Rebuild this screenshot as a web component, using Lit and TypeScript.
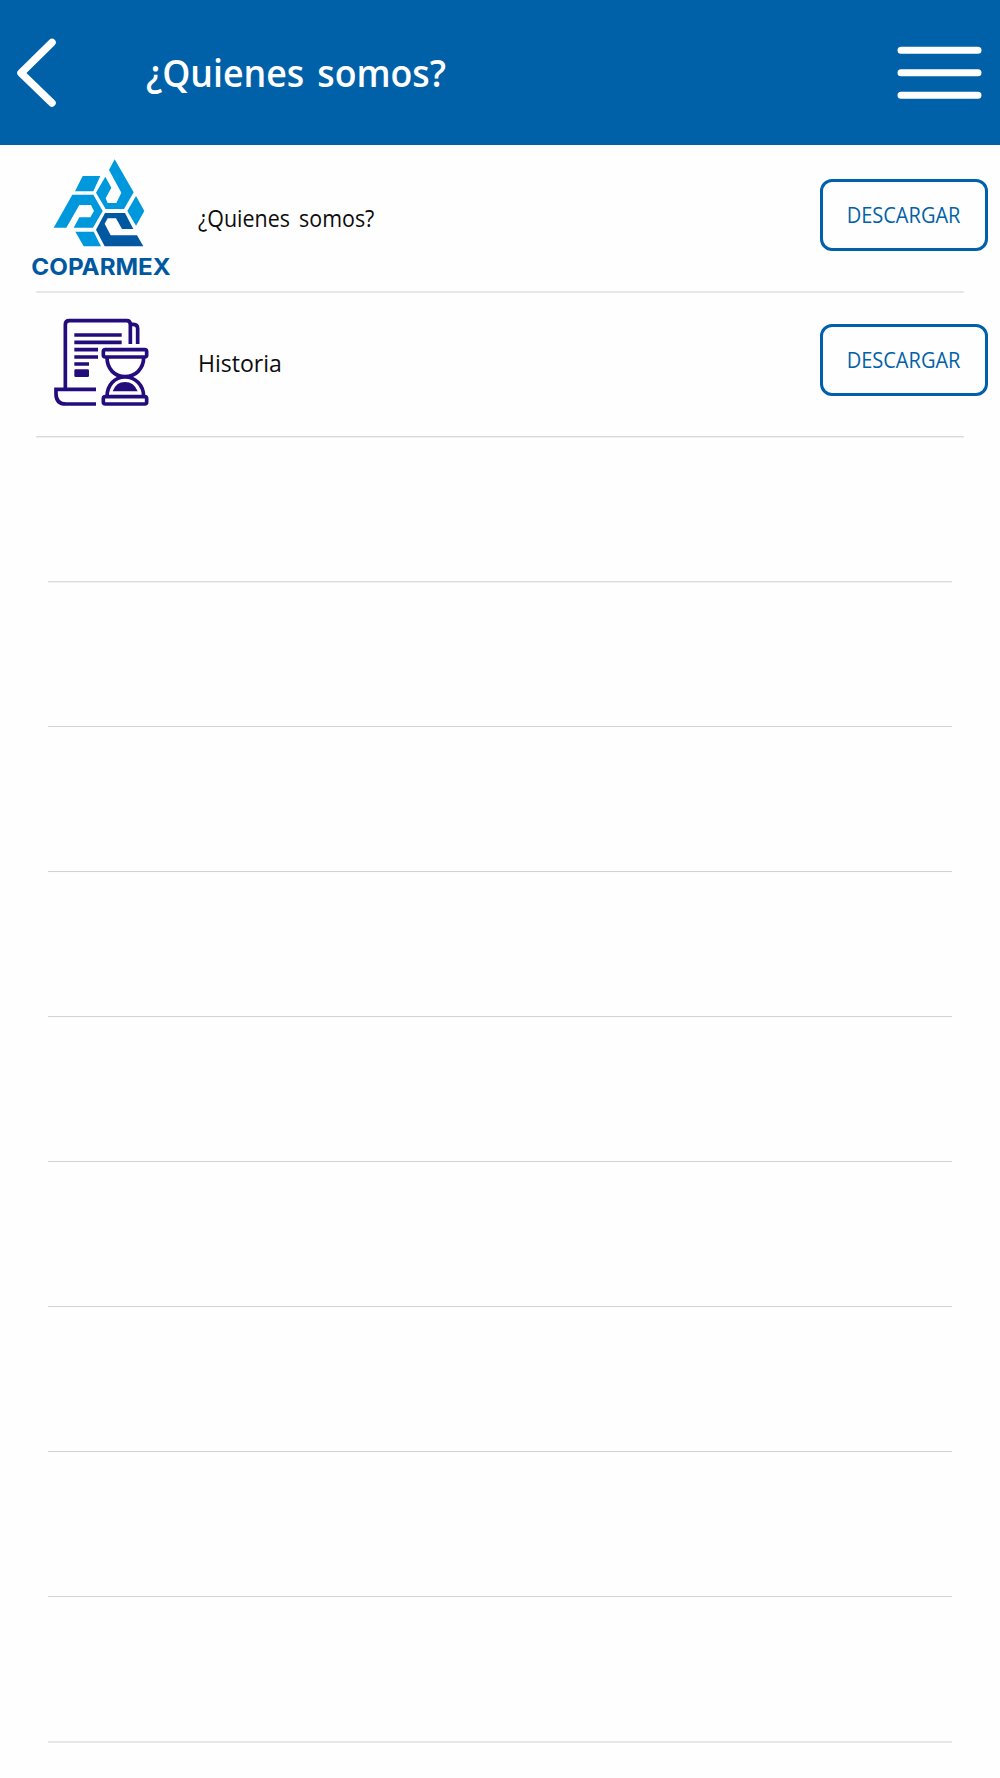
import { LitElement, html, css, svg } from "lit";
import { customElement } from "lit/decorators.js";

const logo = svg`<svg class="logo" viewBox="0 0 480 435" role="img">
  <g fill="#0098dc">
    <path d="M188 93H241L220 139H165Z"/>
    <path d="M284 43L341 142L312 192H257L228 143L256 95L274 128L257 160L263 174H289L304 143L267 75Z"/>
    <path d="M348 153L373 198L348 242L322 198Z"/>
    <path d="M157 149H220L248 198L219 248H161L178 217H211L222 198L213 180H178L139 248H101Z"/>
    <path d="M166 260H221L243 304H191Z"/>
  </g>
  <path fill="#0058a0" d="M255 204H315L340 252H306L288 220H263L254 236L272 271H351L370 304H254L228 254Z"/>
  <text x="34" y="390" class="brand" textLength="418" lengthAdjust="spacingAndGlyphs">COPARMEX</text>
</svg>`;

const history = svg`<svg class="history" viewBox="0 0 420 435" role="img">
  <g fill="none" stroke="#240c7c" stroke-width="11">
    <path d="M106 268V74Q106 62 118 62H290Q301 62 301 74V132"/>
    <path d="M301 73H310Q323 73 323 86V132"/>
    <path d="M198 268H78V281Q78 312 108 312H198"/>
    <path d="M133 105H275M133 127H275M133 149H204M133 171H204M133 192H177"/>
    <rect x="220" y="149" width="130" height="22" rx="6"/>
    <rect x="220" y="290" width="130" height="22" rx="6"/>
    <path d="M231 172C231 207 254 230 285 230S341 207 341 172M231 290C231 255 254 231 285 231S341 255 341 290"/>
  </g>
  <rect x="133" y="208" width="44" height="23" rx="4" fill="#240c7c"/>
  <path d="M248 274Q258 246 285 246T323 274Z" fill="#240c7c"/>
</svg>`;

const rows = [
  { label: "¿Quienes somos?", icon: logo, fit: "wide" },
  { label: "Historia", icon: history, fit: "short" },
];
const blanks = ["soft", "crisp", "crisp", "crisp", "crisp", "crisp", "crisp", "crisp", "even"];

@customElement("app-root")
export class AppRoot extends LitElement {
  static styles = css`
    :host { display: block; height: 1778px; overflow: hidden; background: #fefefe;
      font-family: "Open Sans", "Noto Sans", sans-serif; }
    header { box-sizing: border-box; height: 145px; background: #0061a8; display: flex;
      align-items: center; padding: 0 17px 0 16px; }
    .back { width: 42px; height: 72px; }
    h1 { margin: 0 0 2px 88px; flex: 1; color: #fff; font-size: 38px; line-height: 52px;
      font-weight: 600; white-space: nowrap; }
    h1 span, .label span, button span { display: inline-block; transform-origin: left center; }
    h1 span { transform: scaleX(0.94); word-spacing: 4px; }
    .menu { width: 86px; height: 56px; }
    .line { height: 2px; margin: 0 36px; background: linear-gradient(#dadada 50%, #f0f0f0 50%); }
    .blank { margin: 0 48px; }
    .crisp { background: linear-gradient(#d3d3d3 50%, #fcfcfc 50%); }
    .even { background: #e7e7e7; }
    .slot { box-sizing: border-box; height: 143px; display: flex; align-items: flex-start; }
    .slot.first { height: 146px; padding-top: 3px; }
    .art { width: 198px; flex: none; }
    .logo, .history { display: block; }
    .logo { width: 160px; height: 145px; margin: -3px 0 0 20px; }
    .history { width: 140px; height: 145px; margin: 7px 0 0 30px; }
    .brand { font-family: Inter, "Liberation Sans", sans-serif; font-weight: 700; font-size: 69px; fill: #0058a0; }
    .label { flex: 1; margin-top: 53px; color: #0c0c0c; font-size: 24px; line-height: 34px; }
    .wide span { transform: scaleX(0.893); word-spacing: 4px; }
    .short span { transform: scaleX(0.96); }
    button { box-sizing: border-box; width: 168px; height: 72px; margin: 31px 12px 0 0; padding: 0 1px 2px 0;
      border: 3px solid #0061a8; border-radius: 12px; background: #fefefe; color: #0061a8;
      font: 400 22px/30px "Open Sans", sans-serif; }
    button span { transform: scaleX(0.91); transform-origin: center; }
  `;

  render() {
    return html`
      <header>
        <svg class="back" viewBox="0 0 42 72"><path d="M36 5.5L5 36L36 66" fill="none" stroke="#fff" stroke-width="7.5" stroke-linecap="round" stroke-linejoin="round"/></svg>
        <h1><span>¿Quienes somos?</span></h1>
        <svg class="menu" viewBox="0 0 86 56"><path d="M4 5.2H81M4 27.7H81M4 50.2H81" stroke="#fff" stroke-width="7" stroke-linecap="round"/></svg>
      </header>
      ${rows.map((r, i) => html`
        <div class="slot ${i === 0 ? "first" : ""}">
          <div class="art">${r.icon}</div>
          <div class="label ${r.fit}"><span>${r.label}</span></div>
          <button><span>DESCARGAR</span></button>
        </div>
        <div class="line ${i === 0 ? "even" : ""}"></div>`)}
      ${blanks.map((tone) => html`<div class="slot"></div><div class="line blank ${tone}"></div>`)}
    `;
  }
}
